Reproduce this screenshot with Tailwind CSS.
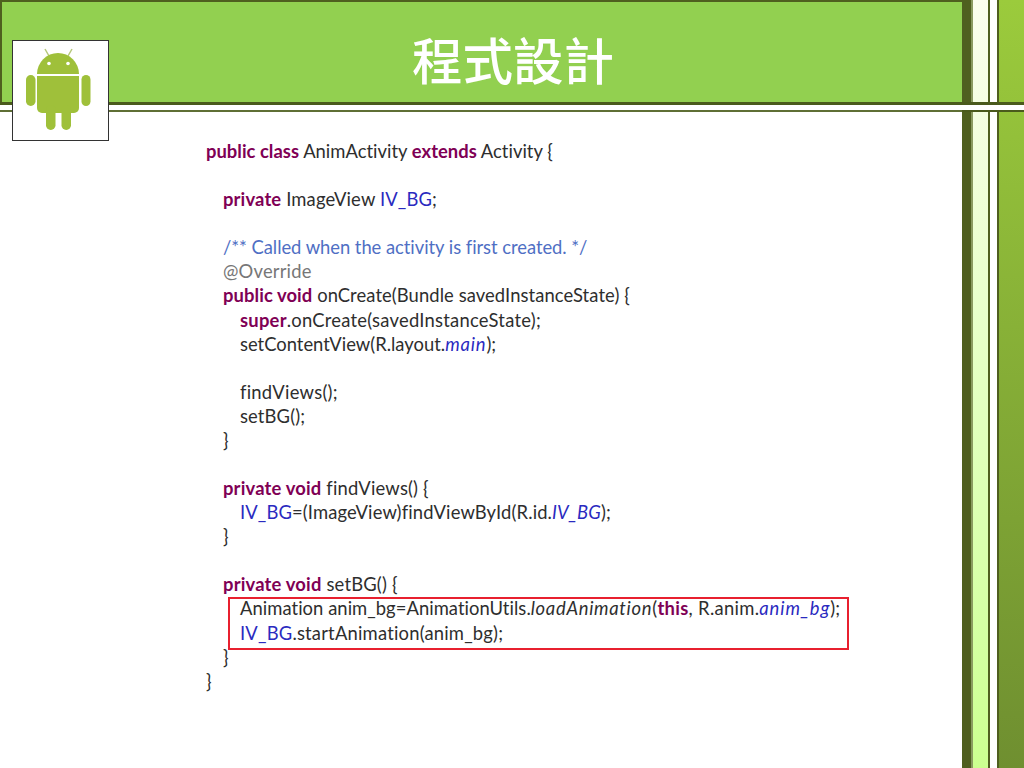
<!DOCTYPE html>
<html lang="zh-Hant">
<head>
<meta charset="utf-8">
<script src="https://cdn.jsdelivr.net/npm/@tailwindcss/browser@4"></script>
</head>
<body class="m-0 bg-white">
<div class="relative flex w-[1024px] h-[768px] overflow-hidden bg-white font-['Lato','Liberation_Sans',sans-serif]">
  <main class="flex flex-col w-[962px] h-full">
    <header class="flex items-center justify-center h-[102px] pl-[62px] pt-[12px] bg-[#92d050] border-t-2 border-l-2 border-[#4f5f1f] shrink-0">
      <h1 class="m-0 text-white text-[50.5px] leading-none font-medium font-['Noto_Sans_CJK_TC',sans-serif]">程式設計</h1>
    </header>
    <div class="h-[3px] bg-[#4a5a1c] shrink-0"></div>
    <div class="h-[5px] bg-white shrink-0"></div>
    <div class="h-[2px] bg-[#5f6f35] shrink-0"></div>
    <section class="pl-[206px] pt-[27px] text-[18.4px] leading-[24.09px] text-[#2e2e2e]">
      <div class="h-[24.09px] tracking-[0.02px]"><b class="text-[#7f0055]">public class</b> AnimActivity <b class="text-[#7f0055]">extends</b> Activity {</div>
      <div class="h-[24.09px]"></div>
      <div class="h-[24.09px] pl-[17px] tracking-[0.15px]"><b class="text-[#7f0055]">private</b> ImageView <span class="text-[#2a2ac0]">IV_BG</span>;</div>
      <div class="h-[24.09px]"></div>
      <div class="h-[24.09px] pl-[17px] text-[#4f6fc4] tracking-[-0.04px]">/** Called when the activity is first created. */</div>
      <div class="h-[24.09px] pl-[17px] text-[#777777] tracking-[0.2px]">@Override</div>
      <div class="h-[24.09px] pl-[17px] tracking-[0.08px]"><b class="text-[#7f0055]">public void</b> onCreate(Bundle savedInstanceState) {</div>
      <div class="h-[24.09px] pl-[34px] tracking-[0.24px]"><b class="text-[#7f0055]">super</b>.onCreate(savedInstanceState);</div>
      <div class="h-[24.09px] pl-[34px]">setContentView(R.layout.<i class="text-[#2a2ac0] tracking-[0.85px]">main</i>);</div>
      <div class="h-[24.09px]"></div>
      <div class="h-[24.09px] pl-[34px] tracking-[0.25px]">findViews();</div>
      <div class="h-[24.09px] pl-[34px] tracking-[0.12px]">setBG();</div>
      <div class="h-[24.09px] pl-[17px]">}</div>
      <div class="h-[24.09px]"></div>
      <div class="h-[24.09px] pl-[17px] tracking-[0.17px]"><b class="text-[#7f0055]">private void</b> findViews() {</div>
      <div class="h-[24.09px] pl-[34px] tracking-[0.13px]"><span class="text-[#2a2ac0]">IV_BG</span>=(ImageView)findViewById(R.id.<i class="text-[#2a2ac0]">IV_BG</i>);</div>
      <div class="h-[24.09px] pl-[17px]">}</div>
      <div class="h-[24.09px]"></div>
      <div class="h-[24.09px] pl-[17px] tracking-[0.18px]"><b class="text-[#7f0055]">private void</b> setBG() {</div>
      <div class="h-[24.09px] pl-[34px] tracking-[0.05px]">Animation anim_bg=AnimationUtils.<i class="tracking-[0.7px]">loadAnimation</i><span class="tracking-[0.3px]">(<b class="text-[#7f0055]">this</b>, R.anim.</span><i class="text-[#2a2ac0] tracking-[0.9px]">anim_bg</i>);</div>
      <div class="h-[24.09px] pl-[34px] tracking-[0.2px]"><span class="text-[#2a2ac0]">IV_BG</span>.startAnimation(anim_bg);</div>
      <div class="h-[24.09px] pl-[17px]">}</div>
      <div class="h-[24.09px]">}</div>
    </section>
  </main>
  <aside class="flex h-full w-[62px] shrink-0">
    <div class="w-[9px] bg-[#4f5f1f]"></div>
    <div class="w-[19px] border-l-2 border-r-2 border-l-[#8a9a60] border-r-[#4f5f1f] bg-gradient-to-b from-[#fbfeee] to-[#ccff90]"></div>
    <div class="w-[7px] bg-white"></div>
    <div class="w-[27px] border-l-2 border-[#4f5f1f] bg-gradient-to-b from-[#9bcb3c] to-[#6f8f30]"></div>
  </aside>
  <div class="absolute left-[962px] top-[102px] w-[62px] h-[3px] bg-[#4a5a1c]"></div>
  <div class="absolute left-[962px] top-[105px] w-[62px] h-[5px] bg-white"></div>
  <div class="absolute left-[962px] top-[110px] w-[62px] h-[2px] bg-[#4a5a1c]"></div>
  <div class="absolute left-[12px] top-[40px] w-[97px] h-[101px] bg-white border border-[#333333]">
    <svg width="95" height="99" viewBox="13 41 95 99" fill="#9fc03a">
      <path d="M45 49l4 7M72 49l-4 7" stroke="#b5c87a" stroke-width="1.5" fill="none"/>
      <path d="M37 74a21 21 0 0 1 42 0z"/>
      <circle cx="49" cy="63.5" r="1.8" fill="#fff"/>
      <circle cx="68" cy="63.5" r="1.8" fill="#fff"/>
      <path d="M37 76h42v32a5 5 0 0 1-5 5H42a5 5 0 0 1-5-5z"/>
      <rect x="26" y="75" width="9.5" height="31" rx="4.7"/>
      <rect x="81.500" y="75" width="9" height="31" rx="4.5"/>
      <rect x="46" y="105" width="9.500" height="25" rx="4.700"/>
      <rect x="61.500" y="105" width="9.500" height="25" rx="4.700"/>
    </svg>
  </div>
  <div class="absolute left-[228px] top-[597px] w-[621px] h-[53px] border-2 border-[#e8202f]"></div>
</div>
</body>
</html>
